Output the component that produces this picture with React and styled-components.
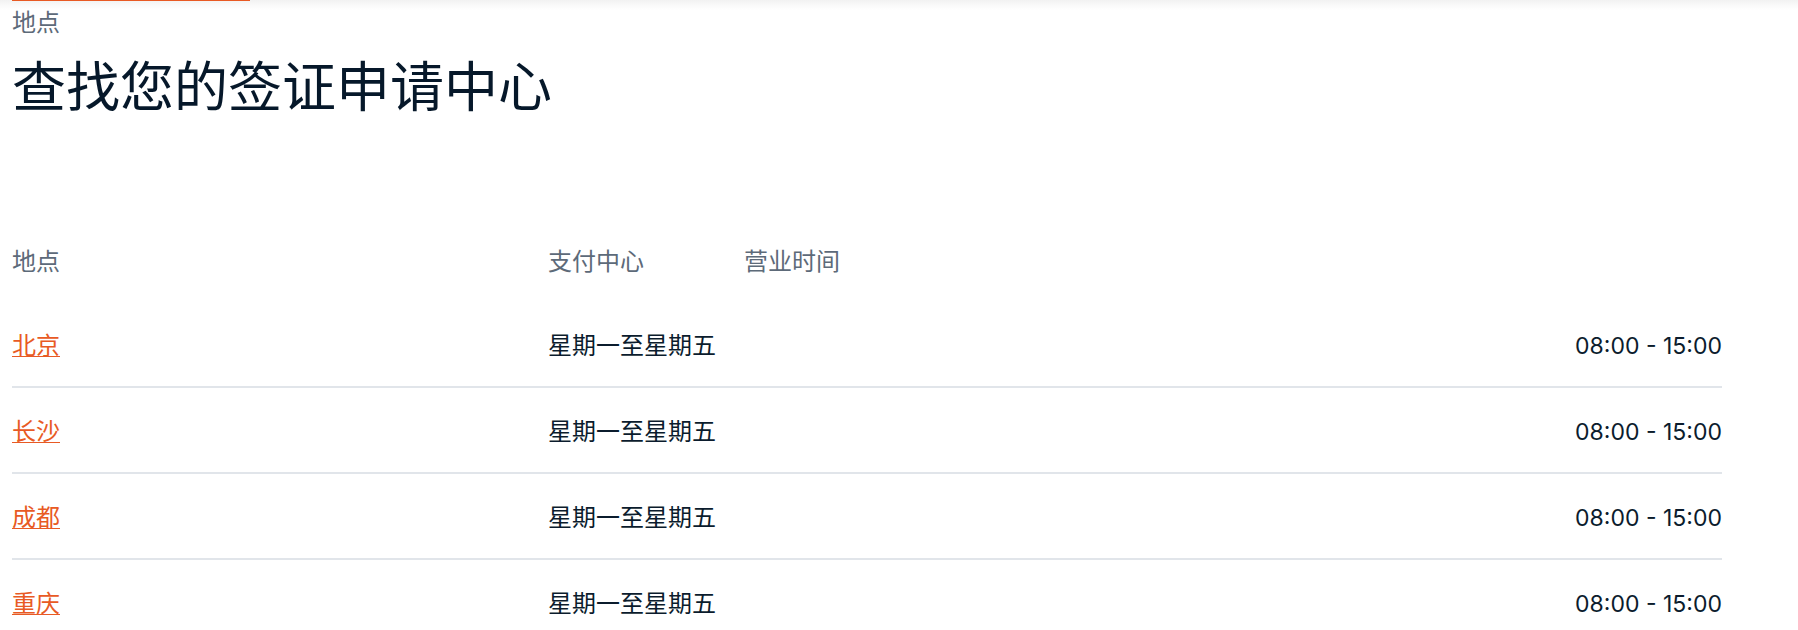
// Imports
import React from 'react'
import styled, { createGlobalStyle } from 'styled-components'



// Data
const centres = [
  { city: '北京', days: '星期一至星期五', hours: '08:00 - 15:00' },
  { city: '长沙', days: '星期一至星期五', hours: '08:00 - 15:00' },
  { city: '成都', days: '星期一至星期五', hours: '08:00 - 15:00' },
  { city: '重庆', days: '星期一至星期五', hours: '08:00 - 15:00' },
]



// Styles
const GlobalStyle = createGlobalStyle`
  html, body {
    margin:0;
    padding:0;
    background:#fff;
  }
  body {
    font-family:Inter, "Noto Sans CJK SC", sans-serif;
    color:#0b1c2d;
    overflow:hidden;
  }
`

const TopStrip = styled.div`
  height:10px;
  padding-left:12px;
  background:linear-gradient(to bottom, #f2f2f2 0%, #f8f8f8 40%, #ffffff 100%);
`

const ActiveMark = styled.div`
  width:238px;
  height:1px;
  background:#e85a24;
`

const Page = styled.main`
  padding-left:12px;
`

const Eyebrow = styled.div`
  font-size:24px;
  line-height:26px;
  color:#5d6a79;
`

const Title = styled.h1`
  margin:20px 0 0;
  font-size:54px;
  line-height:64px;
  font-weight:400;
  color:#06182a;
`

const Table = styled.section`
  width:1710px;
  margin-top:100px;
`

const HeadRow = styled.div`
  display:grid;
  grid-template-columns:536px 196px 1fr;
  padding:24px 0 22px;
  font-size:24px;
  line-height:36px;
  color:#5d6a79;
`

const Row = styled.div`
  display:grid;
  grid-template-columns:536px 1fr auto;
  align-items:center;
  padding:26px 0 22px;
  font-size:24px;
  line-height:36px;
  color:#0b1c2d;
  border-bottom:2px solid #e1e5ea;
`

const CityLink = styled.a`
  color:#e85a24;
  text-decoration:underline;
  text-decoration-thickness:1px;
  text-underline-offset:2px;
  cursor:pointer;
`

const Hours = styled.span`
  font-size:23px;
  text-align:right;
`



// Main Function
const App = () => {
  return (
    <>
      <GlobalStyle />
      <TopStrip>
        <ActiveMark />
      </TopStrip>
      <Page>
        <Eyebrow>地点</Eyebrow>
        <Title>查找您的签证申请中心</Title>
        <Table>
          <HeadRow>
            <span>地点</span>
            <span>支付中心</span>
            <span>营业时间</span>
          </HeadRow>
          {centres.map((item, index) => (
            <Row key={index}>
              <CityLink href='#'>{item.city}</CityLink>
              <span>{item.days}</span>
              <Hours>{item.hours}</Hours>
            </Row>
          ))}
        </Table>
      </Page>
    </>
  )
}


// Export
export default App;
